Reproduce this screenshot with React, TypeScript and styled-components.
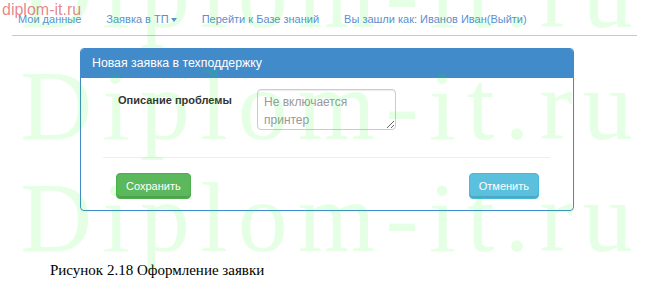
import React from 'react'
import styled, { createGlobalStyle } from 'styled-components'

const GlobalStyle = createGlobalStyle`
  html, body {
    margin: 0;
    padding: 0;
    background: #fff;
  }
`

const Page = styled.div`
  position: relative;
  width: 648px;
  height: 289px;
  overflow: hidden;
  font-family: "Liberation Sans", Arial, sans-serif;
  color: #333;
`

const Nav = styled.div`
  display: flex;
  gap: 25px;
  padding: 11px 0 8px 18px;
  font-size: 11px;
  line-height: 16px;
`

const NavLink = styled.span`
  color: #5b8fd0;
  white-space: nowrap;
`

const Caret = styled.span`
  display: inline-block;
  width: 0;
  height: 0;
  margin-left: 2px;
  vertical-align: middle;
  border-top: 4px solid #5b8fd0;
  border-left: 3px solid transparent;
  border-right: 3px solid transparent;
`

const Divider = styled.div`
  height: 1px;
  margin: 0 11px 0 12px;
  background: #c8c8c8;
`

const Panel = styled.div`
  width: 492px;
  margin: 12px 0 0 80px;
  border: 1px solid #428bca;
  border-radius: 4px;
  box-shadow: 0 1px 2px rgba(0, 0, 0, 0.05);
`

const PanelHeading = styled.div`
  height: 29px;
  padding: 0 11px;
  background: #428bca;
  color: #fff;
  font-size: 12.3px;
  line-height: 29px;
  border-radius: 3px 3px 0 0;
`

const PanelBody = styled.div`
  padding: 11px 0 11px;
`

const FormRow = styled.div`
  display: flex;
  padding-left: 37px;
`

const Label = styled.div`
  width: 139px;
  padding-top: 5px;
  font-size: 11px;
  font-weight: bold;
  color: #333;
`

const TextArea = styled.textarea`
  box-sizing: border-box;
  width: 139px;
  height: 41px;
  padding: 3px 6px;
  border: 1px solid #ccc;
  border-radius: 4px;
  box-shadow: inset 0 1px 1px rgba(0, 0, 0, 0.075);
  font-family: "Liberation Sans", Arial, sans-serif;
  font-size: 12px;
  line-height: 18px;
  color: #555;
  resize: vertical;
  outline: none;

  &::placeholder {
    color: #999;
  }
`

const Rule = styled.div`
  height: 1px;
  margin: 27px 23px 0 22px;
  background: #eee;
`

const Actions = styled.div`
  display: flex;
  justify-content: space-between;
  padding: 15px 34px 0 35px;
`

const Button = styled.button<{ $tone: 'success' | 'info' }>`
  height: 26px;
  padding: 0 9px;
  border: 1px solid ${p => (p.$tone === 'success' ? '#4cae4c' : '#46b8da')};
  border-radius: 4px;
  background: ${p => (p.$tone === 'success' ? '#5cb85c' : '#5bc0de')};
  box-shadow: inset 0 -2px 0 rgba(0, 0, 0, 0.12);
  color: #fff;
  font-family: "Liberation Sans", Arial, sans-serif;
  font-size: 11px;
`

const Caption = styled.div`
  margin: 50px 0 0 50px;
  font-family: "Liberation Serif", "Times New Roman", serif;
  font-size: 15px;
  line-height: 18px;
  color: #000;
`

const Watermark = styled.div`
  position: absolute;
  top: -62px;
  left: 20px;
  pointer-events: none;
  font-family: "Liberation Serif", "Times New Roman", serif;
  font-size: 100px;
  line-height: 112px;
  letter-spacing: 10px;
  color: rgba(0, 255, 0, 0.1);
  white-space: nowrap;
`

const SiteTag = styled.div`
  position: absolute;
  top: 1px;
  left: 2px;
  pointer-events: none;
  font-family: "Liberation Sans", Arial, sans-serif;
  font-size: 16px;
  line-height: 18px;
  color: rgba(215, 70, 70, 0.65);
`

export default function App() {
  return (
    <Page>
      <GlobalStyle />
      <Nav>
        <NavLink>Мои данные</NavLink>
        <NavLink>
          Заявка в ТП<Caret />
        </NavLink>
        <NavLink>Перейти к Базе знаний</NavLink>
        <NavLink>Вы зашли как: Иванов Иван(Выйти)</NavLink>
      </Nav>
      <Divider />
      <Panel>
        <PanelHeading>Новая заявка в техподдержку</PanelHeading>
        <PanelBody>
          <FormRow>
            <Label>Описание проблемы</Label>
            <TextArea placeholder="Не включается принтер" />
          </FormRow>
          <Rule />
          <Actions>
            <Button $tone="success">Сохранить</Button>
            <Button $tone="info">Отменить</Button>
          </Actions>
        </PanelBody>
      </Panel>
      <Caption>Рисунок 2.18 Оформление заявки</Caption>
      <Watermark>
        Diplom-it.ru
        <br />
        Diplom-it.ru
        <br />
        Diplom-it.ru
      </Watermark>
      <SiteTag>diplom-it.ru</SiteTag>
    </Page>
  )
}
